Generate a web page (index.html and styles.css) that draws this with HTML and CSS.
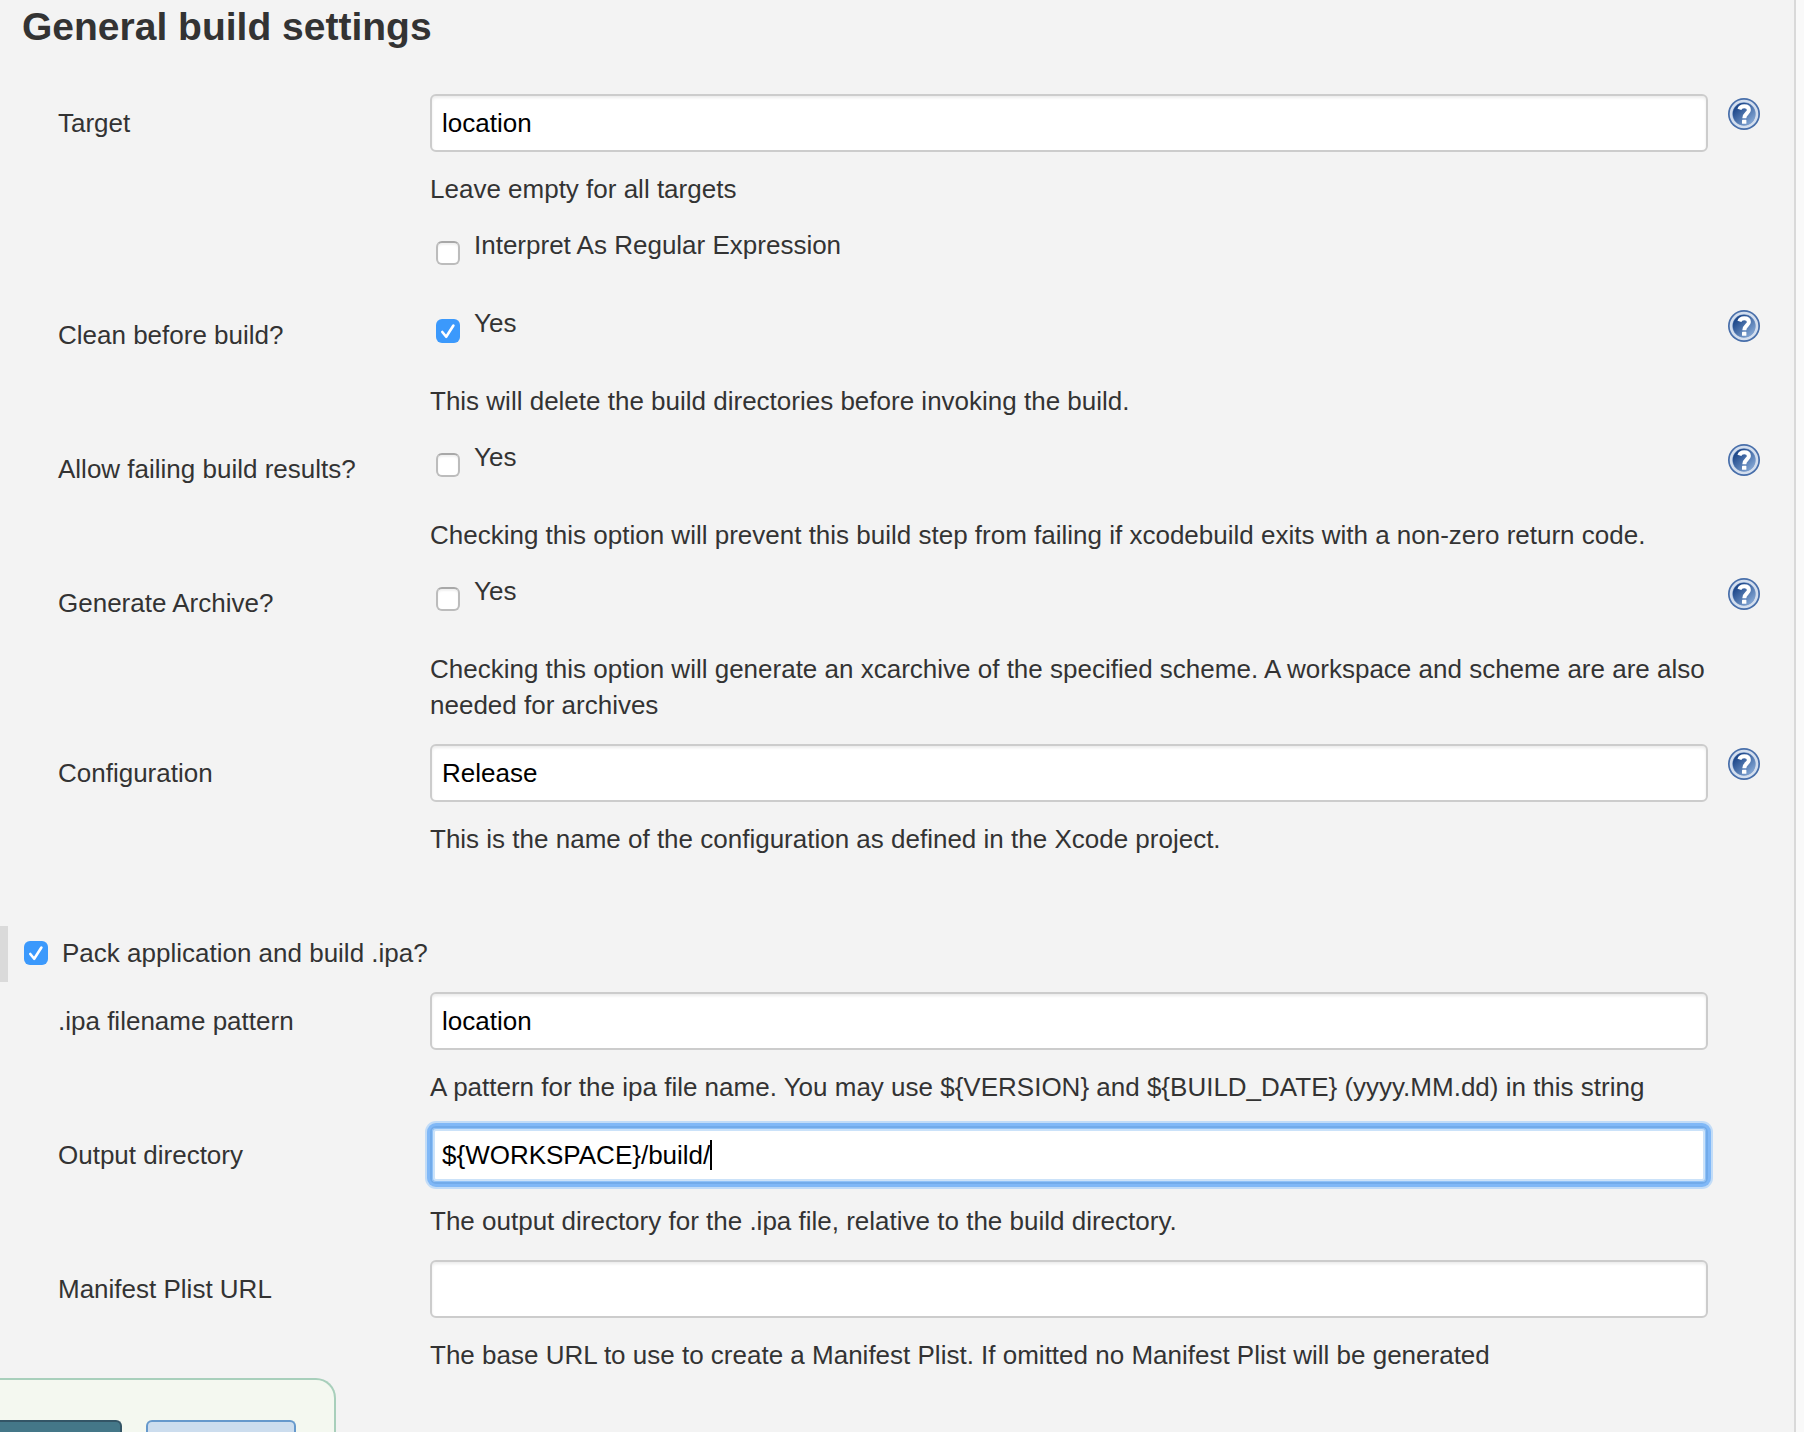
FILE: index.html
```html
<!DOCTYPE html>
<html lang="en">
<head>
<meta charset="utf-8">
<title>General build settings</title>
<link rel="stylesheet" href="styles.css">
</head>
<body>
<svg class="defs" aria-hidden="true">
  <defs>
    <linearGradient id="disc" x1="0" y1="0" x2="1" y2="1">
      <stop offset="0.2" stop-color="#204a8c"/>
      <stop offset="0.9" stop-color="#86a9d6"/>
    </linearGradient>
    <linearGradient id="rim" x1="0" y1="0" x2="1" y2="1">
      <stop offset="0" stop-color="#4a70ab"/>
      <stop offset="1" stop-color="#456da9"/>
    </linearGradient>
    <symbol id="help" viewBox="0 0 32 32">
      <circle cx="16" cy="16" r="16" fill="url(#rim)"/>
      <circle cx="16" cy="16" r="13" fill="#7d9cc9" stroke="#d3deee" stroke-width="2.600"/>
      <circle cx="16" cy="16" r="11.200" fill="url(#disc)"/>
      <path d="M11.400 11.400C12 9.200 13.800 8.300 16.200 8.300c2.900 0 4.700 1.400 4.700 3.700 0 3.200-4.600 3.500-4.600 8.200" fill="none" stroke="#fff" stroke-width="4"/>
      <rect x="14" y="21.800" width="4.400" height="4" rx="0.600" fill="#fff"/>
    </symbol>
  </defs>
</svg>
<form class="panel">
  <h1 class="heading">General build settings</h1>

  <div class="row">
    <label class="name" for="target">Target</label>
    <div class="content">
      <input class="text" id="target" type="text" value="location">
      <p class="note">Leave empty for all targets</p>
    </div>
    <button class="help" type="button" aria-label="Help for Target"><svg><use href="#help"/></svg></button>
  </div>

  <div class="row row-sub">
    <div class="content">
      <label class="check"><input class="box" type="checkbox">Interpret As Regular Expression</label>
    </div>
  </div>

  <div class="row">
    <label class="name" for="clean">Clean before build?</label>
    <div class="content">
      <label class="check"><input class="box" id="clean" type="checkbox" checked>Yes</label>
      <p class="note">This will delete the build directories before invoking the build.</p>
    </div>
    <button class="help" type="button" aria-label="Help for Clean before build"><svg><use href="#help"/></svg></button>
  </div>

  <div class="row">
    <label class="name" for="failing">Allow failing build results?</label>
    <div class="content">
      <label class="check"><input class="box" id="failing" type="checkbox">Yes</label>
      <p class="note">Checking this option will prevent this build step from failing if xcodebuild exits with a non-zero return code.</p>
    </div>
    <button class="help" type="button" aria-label="Help for Allow failing build results"><svg><use href="#help"/></svg></button>
  </div>

  <div class="row">
    <label class="name" for="archive">Generate Archive?</label>
    <div class="content">
      <label class="check"><input class="box" id="archive" type="checkbox">Yes</label>
      <p class="note">Checking this option will generate an xcarchive of the specified scheme. A workspace and scheme are are also needed for archives</p>
    </div>
    <button class="help" type="button" aria-label="Help for Generate Archive"><svg><use href="#help"/></svg></button>
  </div>

  <div class="row">
    <label class="name" for="configuration">Configuration</label>
    <div class="content">
      <input class="text" id="configuration" type="text" value="Release">
      <p class="note">This is the name of the configuration as defined in the Xcode project.</p>
    </div>
    <button class="help" type="button" aria-label="Help for Configuration"><svg><use href="#help"/></svg></button>
  </div>

  <div class="section">
    <label class="section-label"><input class="box" type="checkbox" checked>Pack application and build .ipa?</label>
  </div>

  <div class="row">
    <label class="name" for="pattern">.ipa filename pattern</label>
    <div class="content">
      <input class="text" id="pattern" type="text" value="location">
      <p class="note">A pattern for the ipa file name. You may use ${VERSION} and ${BUILD_DATE} (yyyy.MM.dd) in this string</p>
    </div>
  </div>

  <div class="row">
    <label class="name" for="output">Output directory</label>
    <div class="content">
      <input class="text text-active" id="output" type="text" value="${WORKSPACE}/build/">
      <span class="caret"></span>
      <p class="note">The output directory for the .ipa file, relative to the build directory.</p>
    </div>
  </div>

  <div class="row">
    <label class="name" for="manifest">Manifest Plist URL</label>
    <div class="content">
      <input class="text" id="manifest" type="text">
      <p class="note">The base URL to use to create a Manifest Plist. If omitted no Manifest Plist will be generated</p>
    </div>
  </div>

  <div class="actions">
    <button class="action action-save" type="submit" aria-label="Save"></button>
    <button class="action action-apply" type="button" aria-label="Apply"></button>
  </div>
</form>
</body>
</html>
```
FILE: styles.css
```css
* {
  box-sizing: border-box;
}

body {
  margin: 0;
  padding-right: 8px;
  background: #f9f9f9;
  color: #333;
  font: 26px/36px Helvetica, "Liberation Sans", Arial, sans-serif;
  font-kerning: normal;
}

.defs {
  position: absolute;
  width: 0;
  height: 0;
}

.panel {
  min-height: 100vh;
  padding-right: 34px;
  border-right: 2px solid #d9d9d9;
  background: #f3f3f3;
}

.heading {
  margin: 0;
  padding: 4px 22px 44px;
  font-size: 39px;
  line-height: 46px;
}

.row {
  display: grid;
  grid-template-columns: 372px 1fr 52px;
  align-items: start;
  min-height: 134px;
  padding-left: 58px;
}

.row-sub {
  min-height: 78px;
}

.name {
  line-height: 58px;
}

.content {
  position: relative;
  grid-column: 2;
}

.text {
  display: block;
  width: 100%;
  height: 58px;
  padding: 0 10px;
  border: 2px solid #ccc;
  border-radius: 6px;
  background: #fff;
  box-shadow: inset 0 2px 3px rgba(0, 0, 0, 0.08);
  color: #000;
  font: inherit;
  outline: none;
}

.text-active,
.text:focus {
  border-color: #72abea;
  box-shadow: inset 0 0 0 1px #8fc1f7, inset 0 0 0 3px #cbe2f9,
    0 0 0 3px #80b8f7, 0 0 0 5px #c2dcf7;
}

.caret {
  position: absolute;
  top: 14px;
  left: 280px;
  width: 2px;
  height: 30px;
  background: #000;
}

.note {
  margin: 0;
  padding: 19px 0 21px;
}

.check {
  display: flex;
  gap: 14px;
  height: 58px;
  padding-left: 6px;
  line-height: 34px;
}

.row-sub .check {
  height: 36px;
}

.box {
  flex: none;
  width: 24px;
  height: 24px;
  margin: 0;
  appearance: none;
  border: 2px solid #bcbcbc;
  border-top-color: #a8a8a8;
  border-radius: 6px;
  background: #fff;
  box-shadow: inset 0 2px 2px rgba(0, 0, 0, 0.06);
}

.check .box {
  margin-top: 13px;
}

.box:checked {
  border: 0;
  background: #3b99fc url("data:image/svg+xml,%3Csvg xmlns='http://www.w3.org/2000/svg' viewBox='0 0 24 24'%3E%3Cpath d='M6.300 13l3.900 4.800L17.400 6.500' fill='none' stroke='white' stroke-width='2.600' stroke-linecap='round' stroke-linejoin='round'/%3E%3C/svg%3E");
  box-shadow: none;
}

.help {
  width: 32px;
  height: 32px;
  margin: 4px 0 0 20px;
  padding: 0;
  border: 0;
  background: none;
}

.help svg {
  display: block;
  width: 32px;
  height: 32px;
}

.section {
  margin: 48px 0 10px;
  border-left: 8px solid #dadada;
}

.section-label {
  display: flex;
  align-items: center;
  gap: 14px;
  height: 56px;
  padding: 0 0 2px 16px;
}

.actions {
  position: fixed;
  bottom: 0;
  left: 0;
  display: flex;
  gap: 24px;
  height: 54px;
  padding: 40px 38px 0 0;
  border: 2px solid #a8cfbb;
  border-width: 2px 2px 0 0;
  border-radius: 0 20px 0 0;
  background: #f4f8f0;
}

.action {
  height: 12px;
  padding: 0;
  border: 2px solid;
  border-bottom: 0;
}

.action-save {
  width: 122px;
  border-color: #335566;
  border-left: 0;
  border-radius: 0 6px 0 0;
  background: #447788;
}

.action-apply {
  width: 150px;
  border-color: #6699cc;
  border-radius: 6px 6px 0 0;
  background: #ccddee;
}
```
